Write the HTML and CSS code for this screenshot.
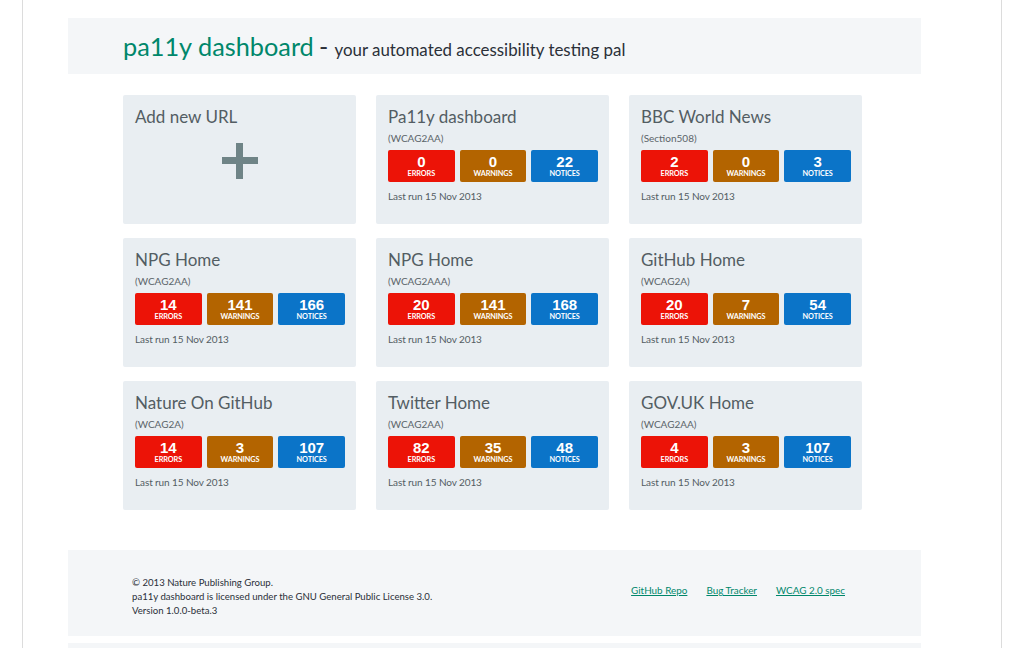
FILE: index.html
```html
<!DOCTYPE html>
<html lang="en">
<head>
<meta charset="utf-8">
<title>pa11y dashboard</title>
<link rel="stylesheet" href="styles.css">
</head>
<body>
<div class="page">
  <header class="masthead">
    <h1 class="brand"><span class="brand-name">pa11y dashboard</span> <span class="dash">-</span> <span class="tagline">your automated accessibility testing pal</span></h1>
  </header>

  <main class="grid">
    <a class="card add-card" href="#">
      <h2 class="card-title">Add new URL</h2>
      <div class="plus" aria-hidden="true"><span class="plus-h"></span><span class="plus-v"></span></div>
    </a>

    <div class="card">
      <h2 class="card-title">Pa11y dashboard</h2>
      <p class="standard">(WCAG2AA)</p>
      <ul class="stats">
        <li class="stat errors"><strong>0</strong><span>Errors</span></li>
        <li class="stat warnings"><strong>0</strong><span>Warnings</span></li>
        <li class="stat notices"><strong>22</strong><span>Notices</span></li>
      </ul>
      <p class="last-run">Last run 15 Nov 2013</p>
    </div>

    <div class="card">
      <h2 class="card-title">BBC World News</h2>
      <p class="standard">(Section508)</p>
      <ul class="stats">
        <li class="stat errors"><strong>2</strong><span>Errors</span></li>
        <li class="stat warnings"><strong>0</strong><span>Warnings</span></li>
        <li class="stat notices"><strong>3</strong><span>Notices</span></li>
      </ul>
      <p class="last-run">Last run 15 Nov 2013</p>
    </div>

    <div class="card">
      <h2 class="card-title">NPG Home</h2>
      <p class="standard">(WCAG2AA)</p>
      <ul class="stats">
        <li class="stat errors"><strong>14</strong><span>Errors</span></li>
        <li class="stat warnings"><strong>141</strong><span>Warnings</span></li>
        <li class="stat notices"><strong>166</strong><span>Notices</span></li>
      </ul>
      <p class="last-run">Last run 15 Nov 2013</p>
    </div>

    <div class="card">
      <h2 class="card-title">NPG Home</h2>
      <p class="standard">(WCAG2AAA)</p>
      <ul class="stats">
        <li class="stat errors"><strong>20</strong><span>Errors</span></li>
        <li class="stat warnings"><strong>141</strong><span>Warnings</span></li>
        <li class="stat notices"><strong>168</strong><span>Notices</span></li>
      </ul>
      <p class="last-run">Last run 15 Nov 2013</p>
    </div>

    <div class="card">
      <h2 class="card-title">GitHub Home</h2>
      <p class="standard">(WCAG2A)</p>
      <ul class="stats">
        <li class="stat errors"><strong>20</strong><span>Errors</span></li>
        <li class="stat warnings"><strong>7</strong><span>Warnings</span></li>
        <li class="stat notices"><strong>54</strong><span>Notices</span></li>
      </ul>
      <p class="last-run">Last run 15 Nov 2013</p>
    </div>

    <div class="card">
      <h2 class="card-title">Nature On GitHub</h2>
      <p class="standard">(WCAG2A)</p>
      <ul class="stats">
        <li class="stat errors"><strong>14</strong><span>Errors</span></li>
        <li class="stat warnings"><strong>3</strong><span>Warnings</span></li>
        <li class="stat notices"><strong>107</strong><span>Notices</span></li>
      </ul>
      <p class="last-run">Last run 15 Nov 2013</p>
    </div>

    <div class="card">
      <h2 class="card-title">Twitter Home</h2>
      <p class="standard">(WCAG2AA)</p>
      <ul class="stats">
        <li class="stat errors"><strong>82</strong><span>Errors</span></li>
        <li class="stat warnings"><strong>35</strong><span>Warnings</span></li>
        <li class="stat notices"><strong>48</strong><span>Notices</span></li>
      </ul>
      <p class="last-run">Last run 15 Nov 2013</p>
    </div>

    <div class="card">
      <h2 class="card-title">GOV.UK Home</h2>
      <p class="standard">(WCAG2AA)</p>
      <ul class="stats">
        <li class="stat errors"><strong>4</strong><span>Errors</span></li>
        <li class="stat warnings"><strong>3</strong><span>Warnings</span></li>
        <li class="stat notices"><strong>107</strong><span>Notices</span></li>
      </ul>
      <p class="last-run">Last run 15 Nov 2013</p>
    </div>
  </main>

  <footer class="site-footer">
    <div class="legal">
      <p>© 2013 Nature Publishing Group.</p>
      <p>pa11y dashboard is licensed under the GNU General Public License 3.0.</p>
      <p>Version 1.0.0-beta.3</p>
    </div>
    <nav class="footer-links">
      <a href="#">GitHub Repo</a>
      <a href="#">Bug Tracker</a>
      <a href="#">WCAG 2.0 spec</a>
    </nav>
  </footer>
  <div class="bottom-strip"></div>
</div>
</body>
</html>
```

FILE: styles.css
```css
* { box-sizing: border-box; }

html, body {
  margin: 0;
  padding: 0;
  background: #ffffff;
  height: 100%;
}

body {
  font-family: Lato, "Open Sans", "Liberation Sans", sans-serif;
  color: #535d63;
  overflow: hidden;
}

.page {
  margin-left: 22px;
  width: 980px;
  min-height: 648px;
  border-left: 1px solid #dcdcdc;
  border-right: 1px solid #dcdcdc;
  padding: 18px 80px 0 45px;
}

.masthead {
  background: #f4f6f8;
  height: 56px;
  padding: 0 55px;
  display: flex;
  align-items: center;
}

.brand {
  margin: 0;
  font-weight: 400;
  line-height: 1;
  white-space: nowrap;
  padding-bottom: 4px;
}

.brand-name {
  color: #00876b;
  font-size: 25.3px;
}

.dash {
  color: #2b3038;
  font-size: 25px;
  margin: 0 -2px 0 -3px;
}

.tagline {
  color: #2b3038;
  font-size: 16.9px;
}

.grid {
  margin: 21px 0 0 55px;
  display: grid;
  grid-template-columns: repeat(3, 233px);
  grid-auto-rows: 129px;
  column-gap: 20px;
  row-gap: 14px;
}

.card {
  background: #e9eef2;
  border-radius: 2px;
  padding: 10px 11px 0 12px;
  text-decoration: none;
  color: inherit;
  display: block;
}

.card-title {
  margin: 0;
  font-size: 17px;
  font-weight: 400;
  line-height: 24px;
  color: #535d63;
}

.standard {
  margin: 3px 0 0;
  font-size: 10px;
  line-height: 12px;
  color: #5b6469;
}

.stats {
  list-style: none;
  margin: 6px 0 0;
  padding: 0;
  display: grid;
  grid-template-columns: repeat(3, 1fr);
  gap: 5px;
}

.stat {
  height: 32px;
  border-radius: 2px;
  color: #ffffff;
  display: flex;
  flex-direction: column;
  align-items: center;
  justify-content: center;
  padding-top: 1px;
}

.stat strong {
  font-family: "Liberation Sans", Arial, sans-serif;
  font-weight: 700;
  font-size: 15px;
  line-height: 14px;
}

.stat span {
  font-size: 7.3px;
  font-weight: 700;
  text-transform: uppercase;
  line-height: 10px;
  letter-spacing: -0.1px;
}

.errors { background: #ec1307; }
.warnings { background: #b36400; }
.notices { background: #0b74c8; }

.last-run {
  margin: 7px 0 0;
  font-size: 10px;
  line-height: 14px;
  color: #535d63;
  letter-spacing: -0.1px;
}

.plus {
  position: relative;
  width: 36px;
  height: 36px;
  margin: 14px auto 0;
}

.plus-h, .plus-v {
  position: absolute;
  background: #6f8487;
}

.plus-h {
  left: 0;
  right: 0;
  top: 14px;
  height: 7px;
}

.plus-v {
  top: 0;
  bottom: 0;
  left: 14px;
  width: 7px;
}

.site-footer {
  margin-top: 40px;
  background: #f4f6f8;
  height: 86px;
  padding: 26px 76px 0 64px;
  display: flex;
  justify-content: space-between;
  align-items: flex-start;
}

.legal p {
  margin: 0;
  font-size: 9.6px;
  line-height: 14px;
  color: #2b3038;
}

.footer-links {
  display: flex;
  gap: 19px;
  padding-top: 7px;
}

.footer-links a {
  font-size: 9.9px;
  line-height: 14px;
  color: #00876b;
  text-decoration: underline;
}

.bottom-strip {
  margin-top: 7px;
  height: 10px;
  background: #f4f6f8;
}
```
